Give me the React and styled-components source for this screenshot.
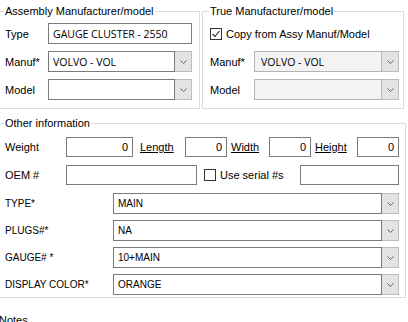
import React from 'react';
import styled, { createGlobalStyle } from 'styled-components';

const GlobalStyle = createGlobalStyle`
  body {
    margin: 0;
    background: #fff;
    font-family: "Liberation Sans", Arial, sans-serif;
    color: #000;
    overflow: hidden;
  }
`

const Page = styled.div`
  margin-left: -2px;
  padding-top: 4px;
  width: 408px;
`

const TopRow = styled.div`
  display: flex;
  gap: 2px;
`

const Group = styled.fieldset`
  box-sizing: border-box;
  margin: ${p => p.$mt || 0}px 0 0 0;
  width: ${p => p.$w}px;
  min-width: 0;
  border: 1px solid #dcdcdc;
  padding: ${p => p.$pt}px ${p => p.$pr}px ${p => p.$pb}px ${p => p.$pl}px;
  display: flex;
  flex-direction: column;
  gap: ${p => p.$gap || 7}px;
`

const Legend = styled.legend`
  font-size: 11px;
  line-height: 14px;
  padding: 0 1px;
  margin-left: -1px;
`

const Row = styled.div`
  display: flex;
  align-items: center;
  height: ${p => p.$h || 21}px;
  margin-top: ${p => p.$mt || 0}px;
`

const Label = styled.span`
  flex: none;
  width: ${p => p.$w}px;
  font-size: ${p => p.$size || 11}px;
  white-space: nowrap;
`

const LinkLabel = styled.span`
  flex: none;
  width: ${p => p.$w}px;
  margin-left: ${p => p.$ml}px;
  font-size: 11px;
  text-decoration: underline;
  text-underline-offset: 1px;
`

// top section fields use a wider face than the lower grid
const fieldFont = p =>
  p.$wide
    ? `font-family: "Open Sans", "Liberation Sans", sans-serif; font-size: 10.5px;`
    : `font-size: ${p.$size || 10}px;`

const TextBox = styled.div`
  box-sizing: border-box;
  flex: ${p => (p.$w ? 'none' : '1')};
  width: ${p => (p.$w ? `${p.$w}px` : 'auto')};
  margin-left: ${p => (p.$push ? 'auto' : '0')};
  height: 100%;
  border: 1px solid #7a7a7a;
  background: #fff;
  padding: 0 4px;
  display: flex;
  align-items: center;
  justify-content: ${p => (p.$right ? 'flex-end' : 'flex-start')};
  white-space: nowrap;
  ${fieldFont}
`

const Combo = styled.div`
  flex: 1;
  display: flex;
  height: 100%;
`

const ComboField = styled.div`
  box-sizing: border-box;
  flex: 1;
  border: 1px solid ${p => (p.$disabled ? '#b4b4b4' : '#7a7a7a')};
  background: ${p => (p.$disabled ? '#f3f3f3' : '#fff')};
  padding: 0 ${p => (p.$disabled ? 6 : 4)}px;
  display: flex;
  align-items: center;
  white-space: nowrap;
  ${fieldFont}
`

const DropButton = styled.div`
  box-sizing: border-box;
  flex: none;
  width: 17px;
  border: 1px solid #bcbcbc;
  border-left: none;
  background: #e3e3e3;
  display: flex;
  align-items: center;
  justify-content: center;
`

const CheckBox = styled.div`
  box-sizing: border-box;
  flex: none;
  width: 12px;
  height: 12px;
  margin-left: ${p => p.$ml || 0}px;
  border: 1px solid #333;
  background: #fff;
  display: flex;
  align-items: center;
  justify-content: center;
`

const CheckText = styled.span`
  margin-left: ${p => p.$ml}px;
  font-size: 11px;
  white-space: nowrap;
`

const NotesLabel = styled.div`
  margin: 15px 0 0 1px;
  font-size: 11px;
  line-height: 14px;
`

const Chevron = () => (
  <svg width="7" height="4" viewBox="0 0 7 4">
    <path d="M0.5 0.5 L3.5 3.5 L6.5 0.5" fill="none" stroke="#606060" strokeWidth="1" />
  </svg>
)

const Tick = () => (
  <svg width="10" height="10" viewBox="0 0 10 10">
    <path d="M1.5 5 L4 7.5 L8.5 2" fill="none" stroke="#222" strokeWidth="1.1" />
  </svg>
)

const Select = ({ value, disabled, wide }) => (
  <Combo>
    <ComboField $disabled={disabled} $wide={wide}>{value}</ComboField>
    <DropButton><Chevron /></DropButton>
  </Combo>
)

const details = [
  ['TYPE*', 'MAIN'],
  ['PLUGS#*', 'NA'],
  ['GAUGE# *', '10+MAIN'],
  ['DISPLAY COLOR*', 'ORANGE'],
]

export default function App() {
  return (
    <Page>
      <GlobalStyle />
      <TopRow>
        <Group $w={202} $pt={5} $pr={7} $pb={8} $pl={6}>
          <Legend>Assembly Manufacturer/model</Legend>
          <Row>
            <Label $w={43}>Type</Label>
            <TextBox $wide>GAUGE CLUSTER - 2550</TextBox>
          </Row>
          <Row>
            <Label $w={43}>Manuf*</Label>
            <Select value="VOLVO - VOL" wide />
          </Row>
          <Row>
            <Label $w={43}>Model</Label>
            <Select value="" wide />
          </Row>
        </Group>
        <Group $w={202} $pt={5} $pr={4} $pb={8} $pl={7}>
          <Legend>True Manufacturer/model</Legend>
          <Row>
            <CheckBox><Tick /></CheckBox>
            <CheckText $ml={4}>Copy from Assy Manuf/Model</CheckText>
          </Row>
          <Row>
            <Label $w={44}>Manuf*</Label>
            <Select value="VOLVO - VOL" disabled wide />
          </Row>
          <Row>
            <Label $w={44}>Model</Label>
            <Select value="" disabled wide />
          </Row>
        </Group>
      </TopRow>

      <Group $w={408} $mt={7} $pt={7} $pr={6} $pb={2} $pl={6} $gap={6}>
        <Legend>Other information</Legend>
        <Row $h={20}>
          <Label $w={61}>Weight</Label>
          <TextBox $w={67} $size={11} $right>0</TextBox>
          <LinkLabel $w={45} $ml={7}>Length</LinkLabel>
          <TextBox $w={42} $size={11} $right>0</TextBox>
          <LinkLabel $w={38} $ml={4}>Width</LinkLabel>
          <TextBox $w={42} $size={11} $right>0</TextBox>
          <LinkLabel $w={42} $ml={4}>Height</LinkLabel>
          <TextBox $w={42} $size={11} $right>0</TextBox>
        </Row>
        <Row $h={20} $mt={2}>
          <Label $w={61}>OEM #</Label>
          <TextBox $w={131} />
          <CheckBox $ml={7} />
          <CheckText $ml={4}>Use serial #s</CheckText>
          <TextBox $w={99} $push />
        </Row>
        {details.map(([name, value], i) => (
          <Row key={name} $mt={i === 0 ? 2 : 0}>
            <Label $w={108} $size={10}>{name}</Label>
            <Select value={value} />
          </Row>
        ))}
      </Group>

      <NotesLabel>Notes</NotesLabel>
    </Page>
  )
}
